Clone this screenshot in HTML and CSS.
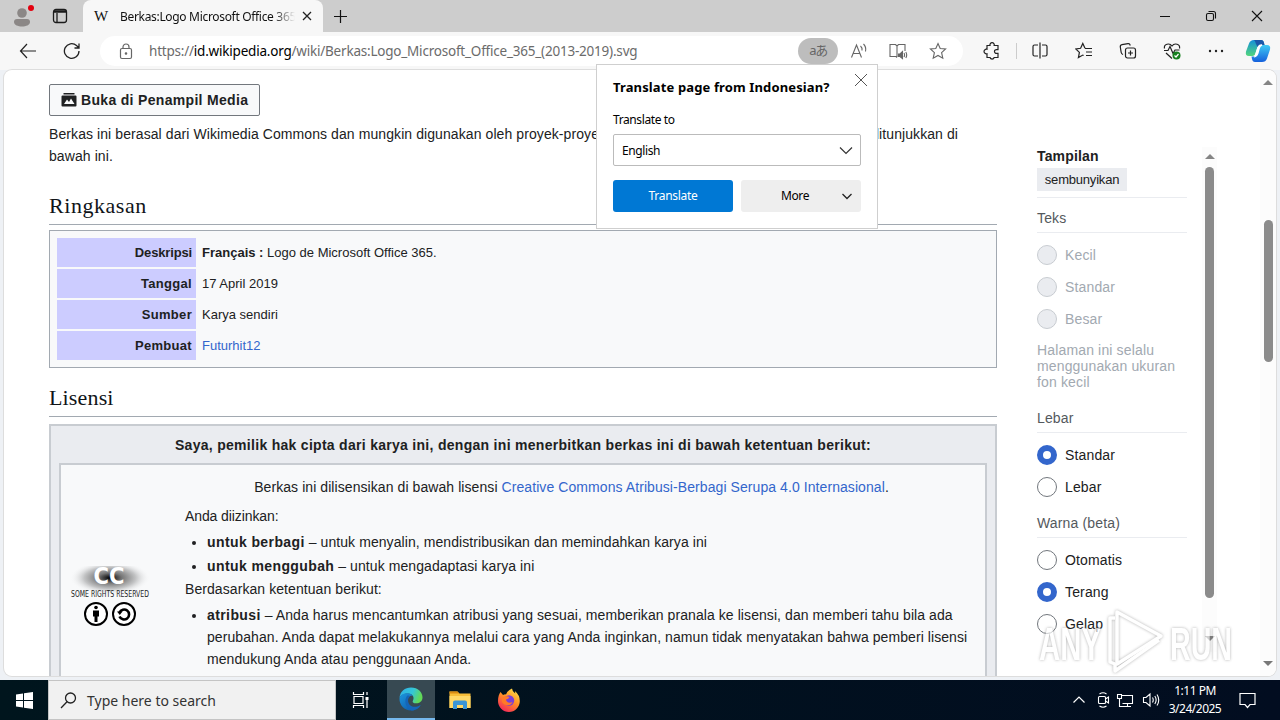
FILE: index.html
```html
<!DOCTYPE html>
<html lang="id">
<head>
  <meta charset="UTF-8">
  <meta name="viewport" content="width=device-width, initial-scale=1.0">
  <title>Berkas:Logo Microsoft Office 365</title>
  <link rel="stylesheet" href="styles.css">
</head>
<body>
  <div class="titlebar">
    <div class="title-left">
      <svg class="avatar" width="26" height="26" viewBox="0 0 26 26"><circle cx="12" cy="10" r="4.8" fill="#8b8786"/><path d="M4 19q0-3 3-3h10q3 0 3 3c0 3-4 4.500-8 4.500s-8-1.500-8-4.500z" fill="#8b8786"/><circle cx="21" cy="5" r="3" fill="#e3000f"/></svg>
      <svg class="tabs-icon" width="16" height="16" viewBox="0 0 16 16" fill="none" stroke="#1b1b1b" stroke-width="1.300"><rect x="1.500" y="1.500" width="13" height="13" rx="2.500"/><path d="M2 4h12M2 3h12M5 5v9"/></svg>
    </div>
    <div class="tab">
      <span class="favicon">W</span>
      <span class="tab-title">Berkas:Logo Microsoft Office 365</span>
      <svg width="10" height="10" viewBox="0 0 10 10" stroke="#222" stroke-width="1.300"><path d="M1 1l8 8M9 1l-8 8"/></svg>
    </div>
    <svg class="plus" width="15" height="15" viewBox="0 0 15 15" stroke="#111" stroke-width="1.200"><path d="M7.500 1v13M1 7.500h13"/></svg>
    <div class="win-buttons">
      <svg width="12" height="12" viewBox="0 0 12 12" stroke="#111"><path d="M1 6.500h10"/></svg>
      <svg width="12" height="12" viewBox="0 0 12 12" fill="none" stroke="#111" stroke-width="1.100"><rect x="1.500" y="3.500" width="7" height="7" rx="1.500"/><path d="M3.500 1.500h5q2 0 2 2v5"/></svg>
      <svg width="12" height="12" viewBox="0 0 12 12" stroke="#111" stroke-width="1.100"><path d="M1 1l10 10M11 1L1 11"/></svg>
    </div>
  </div>

  <div class="toolbar">
    <svg class="back" width="18" height="16" viewBox="0 0 18 16" fill="none" stroke="#222" stroke-width="1.200"><path d="M17 8H1.500M8 1L1.500 8 8 15"/></svg>
    <svg class="reload" width="18" height="18" viewBox="0 0 18 18" fill="none" stroke="#222" stroke-width="1.300"><path d="M16 9a7.300 7.300 0 1 1-2.500-5.500L16 6M16 1.500V6h-4.500"/></svg>
    <div class="address">
      <svg class="lock" width="14" height="17" viewBox="0 0 14 17" fill="none" stroke="#666" stroke-width="1.200"><rect x="1.500" y="5.500" width="11" height="10" rx="1.500"/><path d="M4 5.500V4a3 3 0 0 1 6 0v1.500"/><circle cx="7" cy="10.500" r=".7" fill="#666"/></svg>
      <span class="url">https://<b>id.wikipedia.org</b>/wiki/Berkas:Logo_Microsoft_Office_365_(2013-2019).svg</span>
      <span class="translate-pill">aあ</span>
      <svg width="18" height="18" viewBox="0 0 18 18" fill="none" stroke="#666" stroke-width="1.100"><path d="M1.500 15.500L6.500 3l5 12.500M3.300 11.500h6.500M10.500 4q2 1.800 1.500 4.500M13.500 2q3 3 2 7.500"/></svg>
      <svg width="20" height="18" viewBox="0 0 20 18" fill="none" stroke="#666" stroke-width="1.100"><path d="M9 15.500l-1-1H2v-12h5.500L9 4l1.500-1.500H17V9M9 4v11"/><path d="M10.500 12h1.500l2.500-2.500v7L12 14.500h-1.500z" fill="#666"/><path d="M16 11q1.200 2 0 4M17.800 10q1.800 3 0 6"/></svg>
      <svg class="star" width="18" height="18" viewBox="0 0 18 18" fill="none" stroke="#666" stroke-width="1.100"><path d="M9 1.500l2.200 5 5.400.5-4 3.700 1.200 5.500L9 13.400l-4.800 2.800 1.200-5.500-4-3.700 5.400-.5z"/></svg>
    </div>
    <div class="tools">
      <svg width="18" height="18" viewBox="0 0 18 18" fill="none" stroke="#222" stroke-width="1.200"><path d="M4 3.500h3a2.200 2.200 0 1 1 4.200 0H15v4.200h-1.200a1.900 1.900 0 1 0 0 3.700H15v4.100h-3.800a2.200 2.200 0 0 1-4.200 0H4v-3.800a2.300 2.300 0 1 1 0-4.400z"/></svg>
      <i class="divider"></i>
      <svg width="18" height="18" viewBox="0 0 18 18" fill="none" stroke="#222" stroke-width="1.200"><path d="M7 3H3.500Q2 3 2 4.500v8Q2 14 3.500 14H7M11 3h3.500Q16 3 16 4.500v8q0 1.500-1.500 1.500H11M9 .500v16"/></svg>
      <svg width="18" height="18" viewBox="0 0 18 18" fill="none" stroke="#222" stroke-width="1.200"><path d="M10 6.300L7.800 1.500 5.600 6.300.800 6.900l3.600 3.500-1 5.200 4.400-2.500.8.500M10 6.500h7M11 10h6M11 13.500h6"/></svg>
      <svg width="18" height="18" viewBox="0 0 18 18" fill="none" stroke="#222" stroke-width="1.200"><rect x="6.500" y="6" width="10" height="10" rx="2"/><path d="M11.500 8.500v5M9 11h5M4 12.500q-1.500-.5-1.800-2L1.300 5q-.3-2 1.700-2.400l6-1q1.700-.3 2.300 1.900"/></svg>
      <svg width="18" height="18" viewBox="0 0 18 18" fill="none" stroke="#222" stroke-width="1.200"><path d="M1.500 6.500C.500 2 6.500.500 9 4c2.500-3.500 8.500-2 7.500 2.500M1 8.500h4l2-4 3 7 2-3.500h4.500M3 11l6 5.500"/><circle cx="13.500" cy="13.500" r="4" fill="#16801f" stroke="none"/><path d="M11.500 13.500l1.500 1.500 2.500-3" stroke="#fff"/></svg>
      <svg width="18" height="18" viewBox="0 0 18 18" fill="#222"><circle cx="3" cy="9" r="1.200"/><circle cx="9" cy="9" r="1.200"/><circle cx="15" cy="9" r="1.200"/></svg>
    </div>
    <svg class="copilot" width="26" height="26" viewBox="0 0 26 26">
      <defs>
        <linearGradient id="cpA" x1="0" y1="0" x2="0" y2="1"><stop offset="0" stop-color="#1590d8"/><stop offset="1" stop-color="#52d67d"/></linearGradient>
        <linearGradient id="cpB" x1="0" y1="0" x2="0" y2="1"><stop offset="0" stop-color="#3ecbf4"/><stop offset="1" stop-color="#1560dc"/></linearGradient>
      </defs>
      <path d="M9 2h7q2.500 0 3 3l.5 2h-4q-2.500 0-3.300 3l-1.500 5q-.9 3-3.500 3H4q-4 0-3-4.500L4 5.500Q5.200 2 9 2z" fill="url(#cpA)"/>
      <path d="M9 2h7q2.500 0 3 3l.5 2h-4q-2 0-3 2L11 6Q10 2.500 9 2z" fill="#1b58a8"/>
      <path d="M17 24h-7q-2.500 0-3-3l-.5-2.500h3q2.500 0 3.300-3l1.500-5.500q.9-3 3.500-3H22q4 0 3 4.500l-3 9Q20.800 24 17 24z" fill="url(#cpB)"/>
      <path d="M10 18.500q2-.5 2.800-3l1.500-5.500q.8-2.500 2.700-3-2.500-.3-3.500 1.500-.8 1.500-2.500 7-.5 2-1 3z" fill="#fff" stroke="#fff" stroke-width="1.300"/>
    </svg>
  </div>

  <div class="viewport">
    <div class="page">
      <div class="content">
        <button class="media-btn">
          <svg width="16" height="14" viewBox="0 0 16 14"><path d="M2.500 0h11v1.500h-11zM1.500 2.500h13q1 0 1 1v9q0 1-1 1h-13q-1 0-1-1v-9q0-1 1-1z" fill="#202122"/><path d="M3 11l3-4.500 2 2.500 2-3.500 3.500 5.500z" fill="#f8f9fa"/></svg>
          <span>Buka di Penampil Media</span>
        </button>
        <p class="intro">Berkas ini berasal dari Wikimedia Commons dan mungkin digunakan oleh proyek-proyek lain. Deskripsi dari halaman deskripsinya ditunjukkan di<br>bawah ini.</p>
        <h2>Ringkasan</h2>
        <div class="summary">
          <div class="label tight">Deskripsi</div><div class="value"><b>Français&nbsp;:</b> Logo de Microsoft Office 365.</div>
          <div class="label">Tanggal</div><div class="value">17 April 2019</div>
          <div class="label">Sumber</div><div class="value">Karya sendiri</div>
          <div class="label">Pembuat</div><div class="value"><a>Futurhit12</a></div>
        </div>
        <h2 class="license-title">Lisensi</h2>
        <div class="license">
          <div class="license-head">Saya, pemilik hak cipta dari karya ini, dengan ini menerbitkan berkas ini di bawah ketentuan berikut:</div>
          <div class="license-body">
            <div class="cc-col">
              <svg width="80" height="64" viewBox="0 0 80 64">
                <defs><radialGradient id="ccGlow" cx=".5" cy=".35" r=".5"><stop offset="0" stop-color="#000"/><stop offset=".3" stop-color="#777"/><stop offset=".65" stop-color="#c4c5c6"/><stop offset="1" stop-color="#f8f9fa" stop-opacity="0"/></radialGradient></defs>
                <path d="M0 0h80v34H0z" fill="url(#ccGlow)"/>
                <text x="39" y="18" text-anchor="middle" textLength="31" lengthAdjust="spacingAndGlyphs" class="cc-mark">CC</text>
                <text x="1" y="31" textLength="78" lengthAdjust="spacingAndGlyphs" class="cc-text">SOME RIGHTS RESERVED</text>
                <g fill="#fff" stroke="#000" stroke-width="2"><circle cx="26" cy="48" r="11"/><circle cx="54" cy="48" r="11"/></g>
                <circle cx="26" cy="41.500" r="1.800"/><path d="M23 44.500h6v6h-1.500V56h-3v-5.500H23z"/>
                <path d="M49.500 46.500a5 5 0 1 1 0 4" fill="none" stroke="#000" stroke-width="2.600"/><path d="M47 45.500h5.500l-2.700 3.500z"/>
              </svg>
            </div>
            <div class="terms">
              <div class="terms-title">Berkas ini dilisensikan di bawah lisensi <a>Creative Commons Atribusi-Berbagi Serupa 4.0 Internasional</a>.</div>
              <div class="allowed">Anda diizinkan:</div>
              <ul>
                <li><b>untuk berbagi</b> – untuk menyalin, mendistribusikan dan memindahkan karya ini</li>
                <li><b>untuk menggubah</b> – untuk mengadaptasi karya ini</li>
              </ul>
              <div class="under">Berdasarkan ketentuan berikut:</div>
              <ul class="conditions">
                <li><b>atribusi</b> – Anda harus mencantumkan atribusi yang sesuai, memberikan pranala ke lisensi, dan memberi tahu bila ada<br>perubahan. Anda dapat melakukannya melalui cara yang Anda inginkan, namun tidak menyatakan bahwa pemberi lisensi<br>mendukung Anda atau penggunaan Anda.</li>
              </ul>
            </div>
          </div>
        </div>
      </div>

      <div class="appearance">
        <div class="app-title">Tampilan</div>
        <span class="hide-btn">sembunyikan</span>
        <div class="group-title first">Teks</div>
        <div class="options off">
          <div class="option"><i></i>Kecil</div>
          <div class="option"><i></i>Standar</div>
          <div class="option"><i></i>Besar</div>
        </div>
        <p class="note">Halaman ini selalu<br>menggunakan ukuran<br>fon kecil</p>
        <div class="group-title">Lebar</div>
        <div class="options">
          <div class="option on"><i></i>Standar</div>
          <div class="option"><i></i>Lebar</div>
        </div>
        <div class="group-title color">Warna (beta)</div>
        <div class="options">
          <div class="option"><i></i>Otomatis</div>
          <div class="option on"><i></i>Terang</div>
          <div class="option"><i></i>Gelap</div>
        </div>
      </div>
      <div class="scroll inner"><i class="up"></i><i class="thumb"></i><i class="down"></i></div>
      <div class="scroll outer"><i class="up"></i><i class="thumb"></i><i class="down"></i></div>
    </div>
  </div>

  <div class="taskbar">
    <div class="start"><svg width="17" height="17" viewBox="0 0 17 17" fill="#fff"><path d="M0 2.500l7-1V8H0zM8 1.300L17 0v8H8zM0 9h7v6.500l-7-1zM8 9h9v8l-9-1.300z"/></svg></div>
    <div class="search">
      <svg width="17" height="17" viewBox="0 0 17 17" fill="none" stroke="#222" stroke-width="1.300"><circle cx="10.500" cy="6" r="5"/><path d="M7 9.800L1 16"/></svg>
      <span>Type here to search</span>
    </div>
    <div class="task"><svg width="18" height="18" viewBox="0 0 18 18" fill="none" stroke="#fff" stroke-width="1.200"><path d="M1.500 1v2.500h10V1M1.500 17v-2.500h10V17M2 5.500h9v7H2zM15 1v3M15 9v8"/><path d="M13.500 6h3v3h-3z" fill="#fff" stroke="none"/></svg></div>
    <div class="task active">
      <svg width="24" height="24" viewBox="0 0 24 24">
        <defs>
          <linearGradient id="edA" x1="0" y1="0" x2="1" y2=".3"><stop offset="0" stop-color="#2faee8"/><stop offset=".6" stop-color="#34c6d8"/><stop offset="1" stop-color="#62d957"/></linearGradient>
          <linearGradient id="edB" x1="0" y1="0" x2="1" y2="1"><stop offset="0" stop-color="#1c96df"/><stop offset="1" stop-color="#0c4f9e"/></linearGradient>
        </defs>
        <path d="M.5 11C1 4.500 6 .500 12 .500c7 0 11.500 5 11.500 9.800 0 4-3 6-6.300 6-3 0-4.200-1.200-3.300-2.600C16 10 13 6.500 9 6.500 5 6.500 1.500 8 .5 11z" fill="url(#edA)"/>
        <path d="M.5 11.500C1 8 4.500 6.200 8.500 6.200c2.500 0 4.500 1.200 5.300 2.800C11 8.200 8.500 10 8.500 13.500c0 4 4 7.500 8.500 6.500 2-.4 3.500-1.200 4.600-2-2 3.500-5.600 5.500-9.600 5.500C5.500 23.500.200 18 .5 11.500z" fill="url(#edB)"/>
        <path d="M8 9c-3 4-2 12 4.500 14.400 4 .1 7.500-2.200 9.200-5.500-4 2.800-10 2.600-12-1.500C8.500 13.500 9 11 11 9.300 10 8.500 9 8.400 8 9z" fill="#1465b8"/>
      </svg>
    </div>
    <div class="task"><svg width="22" height="20" viewBox="0 0 22 20"><path d="M.5 1.500h8l2 2h11V18H.5z" fill="#f7bd38"/><path d="M.5 1.500h8l1.500 2H.5z" fill="#d98b12"/><path d="M.5 6h21v12H.5z" fill="#ffd867"/><path d="M4 19v-6.500q0-2 2-2h10q2 0 2 2V19h-4v-4H8v4z" fill="#3a95d6"/></svg></div>
    <div class="task"><svg width="24" height="24" viewBox="0 0 24 24">
      <defs><linearGradient id="ffA" x1=".8" y1="0" x2=".2" y2="1"><stop offset="0" stop-color="#ffe14a"/><stop offset=".45" stop-color="#ff9024"/><stop offset="1" stop-color="#f4205e"/></linearGradient></defs>
      <path d="M3.500 4l2.500 3q1.500-.8 3-.6Q11 2 15 .5q.2 3 3.200 5 0-1.500-.4-2.500 5 4 5 10A10.900 10.900 0 0 1 1 13C1 9 2 6 3.500 4z" fill="url(#ffA)"/><circle cx="12" cy="12.500" r="5.200" fill="#7a3fd6"/><path d="M5 9.500q4-2 7.500-.5-1 2.200-3.500 2.500c0 3 3.800 4 6.500 2.500-1 4-8 4.500-10.500 0z" fill="#ff7a27"/></svg></div>
    <div class="tray">
      <svg class="chevron" width="14" height="14" viewBox="0 0 14 14" fill="none" stroke="#fff" stroke-width="1.200"><path d="M1.500 9.500L7 4l5.500 5.500"/></svg>
      <svg class="meet" width="14" height="18" viewBox="0 0 14 18" fill="none" stroke="#fff" stroke-width="1.100"><rect x="1.500" y="5.500" width="7" height="7" rx="1"/><path d="M8.500 8l3-2v6l-3-2M2.500 3Q6 .500 9.500 3M2.500 15q3.500 2.500 7 0"/></svg>
      <svg width="18" height="16" viewBox="0 0 18 16" fill="none" stroke="#fff" stroke-width="1.100"><path d="M6 3.500h10.500v8h-10M11.500 11.500v3M8 14.500h7M1.500 2.500h4v4h-4zM3.500 6.500v8H8"/></svg>
      <svg width="18" height="16" viewBox="0 0 18 16" fill="none" stroke="#fff" stroke-width="1.100"><path d="M1.500 5.500h2.500L8 2v12l-4-3.500H1.500zM10.500 5.500q1.500 2.500 0 5M12.800 4q2.700 4 0 8M15 2.500q3.500 5.500 0 11"/></svg>
      <div class="clock"><span>1:11 PM</span><span class="date">3/24/2025</span></div>
      <svg class="notify" width="17" height="17" viewBox="0 0 17 17" fill="none" stroke="#fff" stroke-width="1.200"><path d="M1 1.500h15v11h-5L8.500 15.500 6 12.500H1z"/></svg>
    </div>
  </div>

  <div class="popup">
    <svg class="popup-close" width="14" height="14" viewBox="0 0 14 14" stroke="#555"><path d="M1 1l12 12M13 1L1 13"/></svg>
    <div class="popup-title">Translate page from Indonesian?</div>
    <div class="popup-label">Translate to</div>
    <div class="popup-select"><span>English</span><svg width="14" height="9" viewBox="0 0 14 9" fill="none" stroke="#333" stroke-width="1.200"><path d="M1 1.500l6 6 6-6"/></svg></div>
    <div class="popup-actions">
      <div class="btn-primary">Translate</div>
      <div class="btn-more"><span>More</span><svg width="10" height="7" viewBox="0 0 10 7" fill="none" stroke="#222" stroke-width="1.300"><path d="M.5 1L5 5.500 9.500 1"/></svg></div>
    </div>
  </div>

  <svg class="watermark" width="200" height="70" viewBox="0 0 200 70">
    <text x="2" y="54" textLength="62" lengthAdjust="spacingAndGlyphs">ANY</text>
    <text x="133" y="54" textLength="62" lengthAdjust="spacingAndGlyphs">RUN</text>
    <g fill="none" stroke="#fff" stroke-width="3.500" stroke-linejoin="round"><path d="M80 6l44 24-44 28z"/><path d="M78 12h-5v44l5 2v7l44-31"/></g>
  </svg>
</body>
</html>
```

FILE: styles.css
```css
* {
  box-sizing: border-box;
}
body {
  margin: 0;
  width: 1280px;
  height: 720px;
  overflow: hidden;
  display: flex;
  flex-direction: column;
  position: relative;
  background: #f7f7f7;
  font-family: "Liberation Sans", Arial, sans-serif;
  font-size: 14px;
  color: #202122;
}
svg {
  display: block;
  flex: none;
}
a {
  color: #3366cc;
}

/* browser chrome */
.titlebar {
  height: 32px;
  background: #cdcdcd;
  display: flex;
  align-items: center;
  font-family: "Noto Sans", sans-serif;
}
.title-left {
  width: 83px;
  height: 32px;
  display: flex;
  align-items: center;
  gap: 16px;
  padding-left: 10px;
}
.tab {
  width: 240px;
  height: 32px;
  background: #f7f7f7;
  border-radius: 8px 8px 0 0;
  display: flex;
  align-items: center;
  padding: 0 11px;
}
.favicon {
  width: 26px;
  font: 15px "Liberation Serif", serif;
  color: #111;
}
.tab-title {
  width: 175px;
  margin-right: 7px;
  overflow: hidden;
  white-space: nowrap;
  font-size: 12px;
  letter-spacing: -0.32px;
  color: #111;
  -webkit-mask-image: linear-gradient(90deg, #000 88%, transparent);
  mask-image: linear-gradient(90deg, #000 88%, transparent);
}
.plus {
  margin-left: 10px;
}
.win-buttons {
  margin-left: auto;
  display: flex;
  gap: 34px;
  padding-right: 17px;
}
.toolbar {
  height: 38px;
  flex: none;
  background: #f7f7f7;
  display: flex;
  align-items: center;
  padding-left: 19px;
}
.reload {
  margin-left: 26px;
}
.address {
  width: 863px;
  height: 30px;
  margin-left: 19px;
  border-radius: 15px;
  background: #fff;
  display: flex;
  align-items: center;
  gap: 20px;
  padding-left: 19px;
}
.url {
  width: 646px;
  margin-left: -4px;
  margin-right: -17px;
  font: 13.5px "Noto Sans", sans-serif;
  letter-spacing: -0.21px;
  white-space: nowrap;
  color: #6b6b6b;
}
.url b {
  font-weight: normal;
  color: #000;
}
.translate-pill {
  width: 40px;
  height: 26px;
  margin-right: -8px;
  border-radius: 13px;
  background: #bdbdbd;
  color: #666;
  font: 13px/25px "Noto Sans", "Noto Sans CJK JP", sans-serif;
  letter-spacing: -1.5px;
  text-align: center;
}
.star {
  margin-left: 1px;
}
.tools {
  display: flex;
  align-items: center;
  gap: 26px;
  margin-left: 20px;
}
.divider {
  width: 1px;
  height: 16px;
  margin: 0 -12px 0 -11px;
  background: #ccc;
}
.copilot {
  margin-left: 20px;
}

/* page */
.viewport {
  height: 610px;
  flex: none;
  padding: 0 4px 4px;
  background: #eef1f5;
}
.page {
  height: 606px;
  overflow: hidden;
  background: #fff;
  border-radius: 8px;
  box-shadow: 0 0 0 1px #ddd;
  display: flex;
  padding-left: 45px;
}
.content {
  width: 948px;
  flex: none;
  padding-top: 14px;
}
.media-btn {
  display: flex;
  align-items: center;
  gap: 4px;
  width: 211px;
  height: 32px;
  padding: 0 0 0 11px;
  border: 1px solid #72777d;
  border-radius: 2px;
  background: #f8f9fa;
  color: #202122;
  font: bold 14px "Liberation Sans", Arial, sans-serif;
  letter-spacing: 0.32px;
  white-space: nowrap;
}
.intro {
  margin: 7px 0 0;
  line-height: 22px;
  letter-spacing: 0.085px;
  white-space: nowrap;
}
h2 {
  height: 36px;
  margin: 22px 0 5px;
  padding-top: 2px;
  border-bottom: 1px solid #a2a9b1;
  font: 22px/30px "Liberation Serif", serif;
  letter-spacing: 0.55px;
  color: #101418;
}
.summary {
  height: 138px;
  border: 1px solid #a2a9b1;
  background: #f8f9fa;
  padding: 7px;
  display: grid;
  grid-template-columns: 139px 1fr;
  grid-auto-rows: 29px;
  row-gap: 2px;
  font-size: 13px;
  line-height: 29px;
}
.label {
  background: #ccccff;
  font-weight: bold;
  text-align: right;
  padding-right: 4px;
  letter-spacing: 0.3px;
}
.label.tight {
  letter-spacing: -0.15px;
}
.value {
  padding-left: 6px;
}
h2.license-title {
  margin-top: 13px;
  margin-bottom: 7px;
  letter-spacing: 0.15px;
}
.license {
  height: 300px;
  border: 2px solid #c8ccd1;
  background: #eaecf0;
  padding: 0 8px;
}
.license-head {
  height: 37px;
  line-height: 38px;
  text-align: center;
  font-weight: bold;
  letter-spacing: 0.29px;
  white-space: nowrap;
}
.license-body {
  height: 270px;
  border: 2px solid #c8ccd1;
  background: #f8f9fa;
  display: flex;
}
.cc-col {
  width: 124px;
  padding: 101px 0 0 9px;
}
.cc-mark {
  font: bold 23px "DejaVu Sans", sans-serif;
  fill: #fff;
}
.cc-text {
  font: 9px "DejaVu Sans", sans-serif;
  fill: #222;
}
.terms {
  flex: 1;
  line-height: 22px;
  white-space: nowrap;
  letter-spacing: 0.075px;
}
.terms b {
  letter-spacing: 0.4px;
}
.terms-title {
  padding: 11px 27px 0 0;
  text-align: center;
}
.allowed {
  padding-top: 7px;
  letter-spacing: -0.1px;
}
.terms ul {
  margin: 4px 0 0;
  padding-left: 22px;
}
.terms li {
  margin-bottom: 2px;
}
.terms .conditions {
  margin-top: 4px;
}
.under {
  margin-top: -1px;
}

/* appearance menu */
.appearance {
  width: 150px;
  margin-left: 40px;
  padding-top: 77px;
  letter-spacing: 0.15px;
}
.app-title {
  font-weight: bold;
  line-height: 18px;
}
.hide-btn {
  display: block;
  width: 90px;
  height: 23px;
  margin-top: 3px;
  background: #eaecf0;
  font-size: 13px;
  letter-spacing: -0.2px;
  line-height: 23px;
  text-align: center;
}
.group-title {
  height: 26px;
  margin-top: 17px;
  line-height: 22px;
  border-bottom: 1px solid #eaecf0;
  color: #54595d;
}
.group-title.first {
  margin-top: 6px;
  height: 36px;
  padding-top: 9px;
  border-top: 1px solid #eaecf0;
}
.group-title.color {
  margin-top: 9px;
}
.options {
  padding-top: 6px;
}
.option {
  height: 32px;
  display: flex;
  align-items: center;
  gap: 8px;
}
.option i {
  width: 20px;
  height: 20px;
  border: 1px solid #72777d;
  border-radius: 50%;
  background: #fff;
}
.option.on i {
  border: 6px solid #3366cc;
}
.off .option,
.note {
  color: #a2a9b1;
}
.off .option i {
  border-color: #c8ccd1;
  background: #eaecf0;
}
.note {
  margin: 7px 0 0;
  line-height: 16px;
  white-space: nowrap;
}
.scroll {
  display: flex;
  flex-direction: column;
  align-items: center;
}
.scroll i {
  flex: none;
}
.inner {
  width: 15px;
  height: 505px;
  margin: 77px 0 0 15px;
  padding-top: 7px;
  background: #fcfcfc;
}
.outer {
  width: 16px;
  margin-left: auto;
  padding-top: 10px;
  background: #fcfcfc;
}
.up {
  border: 5px solid transparent;
  border-top: 0;
  border-bottom-color: #858585;
}
.down {
  border: 5px solid transparent;
  border-bottom: 0;
  border-top-color: #777;
}
.thumb {
  width: 9px;
  border-radius: 5px;
  background: #8b8b8b;
}
.inner .thumb {
  height: 431px;
  margin: 8px 0 38px;
}
.outer .thumb {
  height: 142px;
  margin: 135px 0 299px;
}

/* taskbar */
.taskbar {
  height: 40px;
  flex: none;
  background: linear-gradient(90deg, #00151d, #020d20);
  display: flex;
  color: #fff;
  font-family: "Noto Sans", sans-serif;
}
.start,
.task {
  width: 48px;
  display: flex;
  align-items: center;
  justify-content: center;
}
.search {
  width: 288px;
  background: #f1f1f1;
  border: 1px solid #c4c4c4;
  display: flex;
  align-items: center;
  gap: 10px;
  padding-left: 11px;
  color: #333;
  font-size: 14px;
}
.task {
  width: 49px;
}
.task.active {
  width: 48px;
  margin-left: 2px;
  background: #374952;
  border-bottom: 2px solid #76b9ed;
}
.tray {
  margin-left: auto;
  display: flex;
  align-items: center;
  padding-right: 24px;
  gap: 8px;
}
.tray .chevron {
  margin-right: -2px;
}
.tray .meet {
  margin: 0 -3px 0 5px;
}
.clock {
  width: 60px;
  margin-left: -3px;
  display: flex;
  flex-direction: column;
  align-items: center;
  font-size: 12px;
  line-height: 18px;
  letter-spacing: -0.5px;
}
.notify {
  margin-left: 6px;
}

/* translate popup over the page */
.popup {
  position: absolute;
  left: 596px;
  top: 64px;
  width: 282px;
  height: 165px;
  padding: 13px 16px;
  background: #fff;
  border: 1px solid #cfcfcf;
  font: 12px "Noto Sans", sans-serif;
  letter-spacing: -0.4px;
  color: #000;
}
.popup-close {
  position: absolute;
  right: 9px;
  top: 8px;
}
.popup-title {
  font-size: 13px;
  font-weight: bold;
  line-height: 18px;
  letter-spacing: 0.13px;
}
.popup-label {
  margin-top: 15px;
  line-height: 18px;
}
.popup-select {
  height: 32px;
  margin-top: 5px;
  padding: 0 7px 0 8px;
  border: 1px solid #bbb;
  border-radius: 2px;
  display: flex;
  align-items: center;
  justify-content: space-between;
}
.popup-actions {
  display: flex;
  gap: 8px;
  margin-top: 14px;
}
.btn-primary,
.btn-more {
  width: 120px;
  height: 32px;
  border-radius: 3px;
  line-height: 32px;
  text-align: center;
}
.btn-primary {
  background: #0078d4;
  color: #fff;
  letter-spacing: -0.3px;
}
.btn-more {
  background: #eee;
  display: flex;
  align-items: center;
  padding: 0 9px 0 40px;
  justify-content: space-between;
}

.watermark {
  position: absolute;
  left: 1037px;
  top: 606px;
  opacity: 0.65;
  filter: drop-shadow(0 0 1.5px #888);
}
.watermark text {
  font: bold 46px "Liberation Sans", Arial, sans-serif;
  fill: #fff;
}
```
